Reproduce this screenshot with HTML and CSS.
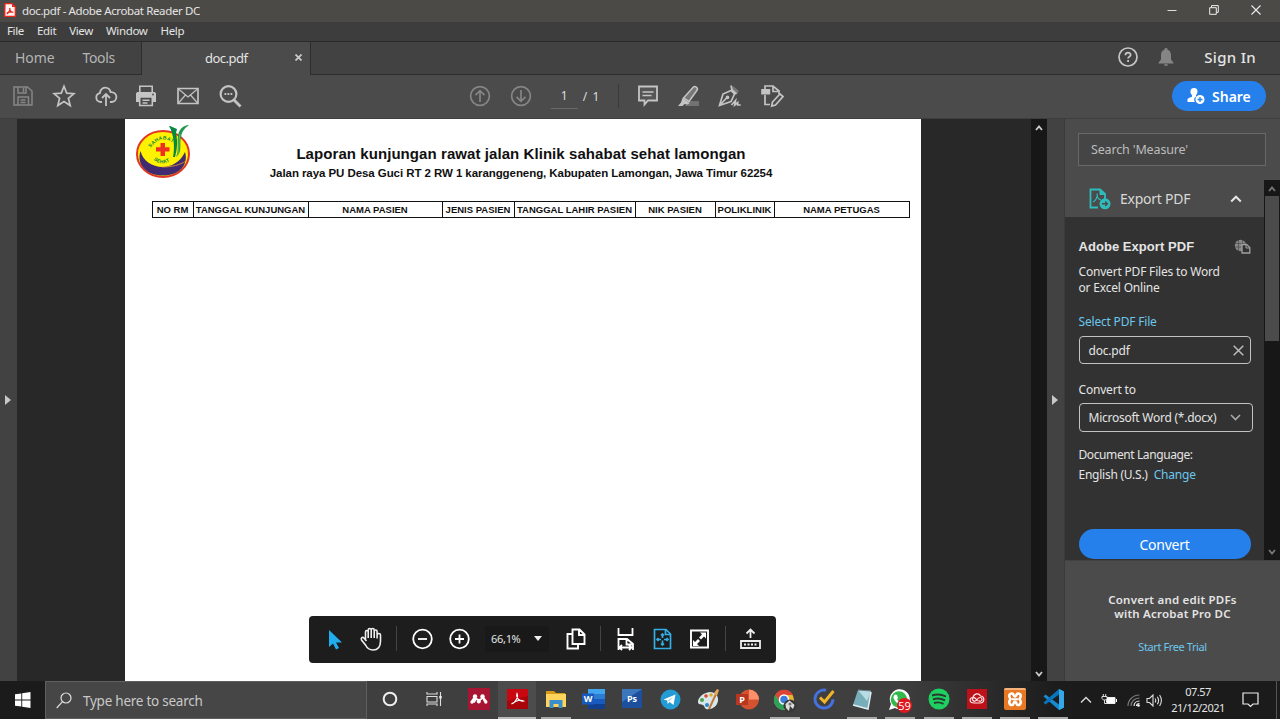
FILE: index.html
```html
<!DOCTYPE html>
<html lang="en">
<head>
<meta charset="utf-8">
<title>doc.pdf - Adobe Acrobat Reader DC</title>
<link rel="stylesheet" href="styles.css">
</head>
<body>
<div class="window">
  <header class="titlebar">
    <svg class="app-icon" width="12" height="14" viewBox="0 0 12 14"><path d="M1 .7h7L11.300 4v9.300H.7z" fill="#fff4f2" stroke="#e8271b" stroke-width="1.300"/><path d="M8 .7v3.300h3.300z" fill="#e8271b"/><path d="M2.700 11c2-1 3.600-4 3.200-6M5.700 5c0 2.500 1.500 4.300 3.600 4.400M3 9.800c2-.8 4-1.200 6.200-.8" fill="none" stroke="#e8271b" stroke-width="1.200"/></svg>
    <span class="title">doc.pdf - Adobe Acrobat Reader DC</span>
    <div class="window-controls">
      <svg width="10" height="10" viewBox="0 0 10 10"><path d="M.5 5.500h9" stroke="#ddd" stroke-width="1"/></svg>
      <svg width="10" height="10" viewBox="0 0 10 10" fill="none" stroke="#eee"><path d="M.7 2.700h6.600v6.600H.7zM2.500 2.500V.6h6.800v6.700H7.500"/></svg>
      <svg width="10" height="10" viewBox="0 0 10 10" stroke="#eee" stroke-width="1.100"><path d="M.5.5l9 9M9.500.5l-9 9"/></svg>
    </div>
  </header>

  <nav class="menubar"><span>File</span><span>Edit</span><span>View</span><span>Window</span><span>Help</span></nav>

  <div class="tabs">
    <div class="tab-home"><span>Home</span><span class="tools">Tools</span></div>
    <div class="tab-doc"><span>doc.pdf</span>
      <svg width="7" height="7" viewBox="0 0 7 7" stroke="#ccc" stroke-width="1.700"><path d="M.5.5l6 6M6.500.5l-6 6"/></svg>
    </div>
    <div class="account">
      <svg width="20" height="20" viewBox="0 0 20 20" fill="none" stroke="#c6c6c6"><circle cx="10" cy="10" r="9" stroke-width="1.700"/><path d="M7.400 8.300c0-3.500 5.200-3.300 5.200-.4 0 1.700-2.500 1.800-2.500 3.700M10.100 13v1.900" stroke-width="1.800"/></svg>
      <svg width="16" height="18" viewBox="0 0 16 18" fill="#858585"><path d="M8 0a1.500 1.500 0 0 1 1.500 1.700C12 2.400 13 4.500 13 7v4.500l2.500 3.200v.8H.5v-.8L3 11.500V7c0-2.500 1-4.600 3.500-5.300A1.500 1.500 0 0 1 8 0zM6 16.200h4a2 1.800 0 0 1-4 0z"/></svg>
      <span>Sign In</span>
    </div>
  </div>

  <div class="toolbar">
    <div class="file-tools">
      <svg width="22" height="22" viewBox="0 0 22 22" fill="none" stroke="#868686" stroke-width="1.500"><path d="M2 2h13.500L20 6v14H2zM6 2v6h8V2M11.500 3v4M6 20v-8h10.500v8M8.500 15h5M8.500 17.500h5"/></svg>
      <svg width="24" height="24" viewBox="0 0 24 24" fill="none" stroke="#c4c4c4" stroke-width="1.700"><path d="M12 2.300l2.700 6.800 7.300.5-5.600 4.700 1.800 7.200-6.200-4-6.200 4 1.800-7.200L2 9.600l7.300-.5z"/></svg>
      <svg width="24" height="24" viewBox="0 0 24 24" fill="none" stroke="#c4c4c4" stroke-width="1.800"><path d="M8 18H6.500a4.500 4.500 0 0 1-.6-8.900C6 4.800 10 2.600 13.300 4c2 .7 3 2.300 3.300 4.100 3.500-.3 5.800 2 5.800 4.900 0 3-2.200 5-5 5H16M12 22V10.500M8 14l4-4 4 4"/></svg>
      <svg class="print" width="24" height="24" viewBox="0 0 24 24" fill="#c4c4c4"><path d="M3.500 8h17L22 9.500V18h-3v-4H5v4H2V9.500z"/><path d="M5.800 2.300h12.400V9H5.800z" fill="#4b4b4b" stroke="#c4c4c4" stroke-width="1.600"/><path d="M3.500 8h17L22 9.500V14H2V9.500z"/><path d="M5.700 13h12.600v8.500H5.700z" fill="#4b4b4b" stroke="#c4c4c4" stroke-width="1.600"/><path d="M8.500 15.500h7V17h-7zM8.500 18.200h5v1.500h-5z"/><circle cx="19" cy="10.500" r=".9" fill="#4b4b4b"/></svg>
      <svg width="22" height="18" viewBox="0 0 22 18" fill="none" stroke="#c4c4c4"><path d="M1 1.500h20v15H1z" stroke-width="1.700"/><path d="M1.500 2l9.500 8 9.500-8M1.500 16l7-8M20.500 16l-7-8" stroke-width="1.200"/></svg>
      <svg width="24" height="24" viewBox="0 0 24 24" fill="none" stroke="#c4c4c4"><circle cx="10.500" cy="10" r="7.900" stroke-width="2.200"/><path d="M16 16l6.500 6.500" stroke-width="2.900"/><path d="M6.500 10h8" stroke-width="1.900" stroke-dasharray="1.800 1.200"/></svg>
    </div>
    <div class="page-tools">
      <svg width="22" height="22" viewBox="0 0 22 22" fill="none" stroke="#858585" stroke-width="1.700"><circle cx="11" cy="11" r="9.400"/><path d="M11 17V6M6.500 10.200L11 5.700l4.500 4.500"/></svg>
      <svg width="22" height="22" viewBox="0 0 22 22" fill="none" stroke="#858585" stroke-width="1.700"><circle cx="11" cy="11" r="9.400"/><path d="M11 5v11M6.500 11.800l4.500 4.500 4.500-4.500"/></svg>
      <span class="page-no">1</span><span class="page-total">/&nbsp; 1</span>
    </div>
    <div class="mark-tools">
      <svg width="24" height="24" viewBox="0 0 24 24" fill="none" stroke="#c4c4c4" stroke-width="1.800"><path d="M3 2.500h18v14H12L8.500 20.500v-4H3z" fill="#555"/><path d="M6.500 8h11M6.500 11.500h9" stroke-width="1.300"/></svg>
      <svg width="24" height="24" viewBox="0 0 24 24"><path d="M10 17h12v5H8z" fill="#727272"/><path d="M6.500 14L16 3.500c2-2.200 5.500.3 4 2.800L12 17.500z" fill="#777" stroke="#c4c4c4" stroke-width="1.500"/><path d="M5.500 14l7 5-1.500 1.500-3.500-.5L5.500 22H1l3-3.500z" fill="#c4c4c4"/></svg>
      <svg width="24" height="24" viewBox="0 0 24 24" fill="none" stroke="#c4c4c4" stroke-width="1.700"><path d="M15 2l6 5-2 3-6-5z" fill="#777" stroke="none"/><path d="M13 1.500l1 4.500 4.500 4M13 6.500L5 10 1.500 21.500l11.500-4 3.500-7.500zM2 21l7-7.500"/><circle cx="9.500" cy="13.300" r="1" fill="#c4c4c4"/><path d="M13.500 21l4-4.500-.8 4.500 3-2.500v2.500h3" stroke-width="1.700"/></svg>
      <svg width="24" height="24" viewBox="0 0 24 24" fill="none" stroke="#c4c4c4" stroke-width="1.700"><path d="M5 5V2h8l6 5v3M13 2v5.500h5M5 11v9.500h5"/><path d="M1.200 5h9v5.500h-9z" fill="#c4c4c4" stroke="none"/><path d="M12.500 18l7.500-8 3 2.500-7.500 8.500-3.800 1z"/></svg>
    </div>
    <button class="share">
      <svg width="18" height="18" viewBox="0 0 18 18" fill="#fff"><path d="M7 1c4.500 0 4.200 5 2 7.300v1.200C6.500 11 7 14 8 15H.5v-2.200c0-1.800 3.500-2.300 4.500-3V8.300C2.800 6 2.500 1 7 1z"/><circle cx="13" cy="12.500" r="4.500"/><path d="M13 10v5M10.500 12.500h5" stroke="#2680eb" stroke-width="1.300"/></svg>
      <span>Share</span>
    </button>
  </div>

  <main class="workspace">
    <div class="gutter left"><i class="arrow"></i></div>
    <div class="viewer">
      <article class="page">
        <svg class="logo" width="56" height="56" viewBox="0 0 56 56">
          <ellipse cx="28" cy="30" rx="26" ry="23" fill="#fff200" stroke="#e23626" stroke-width="2"/>
          <path d="M5.500 27C10 46 40 50 50 28c4 13-6 23.500-22 23.500S1 41 5.500 27z" fill="#422a70"/>
          <path d="M27 43c10 0 18-2 24-6" fill="none" stroke="#e9a126" stroke-width=".8"/>
          <path d="M35 2l7 3-1 4c2 9 1 17-1 24h-2c2-9 1-23-4-31z" fill="#07883f"/>
          <path d="M54 1c-6 0-11 5-11 12-1 8 1 13-2 20 7-5 3-13 5-20 1-6 4-9 8-12z" fill="#20994d"/>
          <path d="M45 10c-2 9 0 16-3 23" fill="none" stroke="#b7d94a" stroke-width=".5"/>
          <path d="M25.500 19h4.500v4.200h4.500v4.300H30V32h-4.500v-4.500H21v-4.300h4.500z" fill="#ed3024"/>
          <path id="arcTop" d="M15.500 24Q27 8 41 22" fill="none"/><path id="arcLow" d="M17 34Q28 46 42 31" fill="none"/>
          <text class="logo-text"><textPath href="#arcTop">SAHABAT</textPath></text>
          <text class="logo-text"><textPath href="#arcLow" startOffset="2">SEHAT</textPath></text>
        </svg>
        <h1>Laporan kunjungan rawat jalan Klinik sahabat sehat lamongan</h1>
        <p class="address">Jalan raya PU Desa Guci RT 2 RW 1 karanggeneng, Kabupaten Lamongan, Jawa Timur 62254</p>
        <table class="visits">
          <colgroup><col class="c1"><col class="c2"><col class="c3"><col class="c4"><col class="c5"><col class="c6"><col class="c7"><col class="c8"></colgroup>
          <tr><th>NO RM</th><th>TANGGAL KUNJUNGAN</th><th>NAMA PASIEN</th><th>JENIS PASIEN</th><th>TANGGAL LAHIR PASIEN</th><th>NIK PASIEN</th><th>POLIKLINIK</th><th>NAMA PETUGAS</th></tr>
        </table>
      </article>
    </div>
    <div class="scroll doc-scroll">
      <svg width="8" height="6" viewBox="0 0 8 6"><path d="M1 5l3-3.500L7 5" /></svg>
      <svg width="8" height="6" viewBox="0 0 8 6"><path d="M1 1l3 3.500L7 1"/></svg>
    </div>
    <div class="gutter right"><i class="arrow"></i></div>

    <aside class="panel">
      <div class="search">Search 'Measure'</div>
      <div class="panel-body">
        <div class="panel-content">
          <div class="export-head">
            <svg width="22" height="22" viewBox="0 0 22 22" fill="none" stroke="#2dbdbd"><path d="M9 19.500H1.500V1.500h9.500L16 6v5" stroke-width="1.800"/><path d="M11 2v4.500h4.500" fill="#2dbdbd"/><path d="M4 14c3-1 5-6 4-8.500M8 6c0 4 2 5.500 4 6" stroke-width="1.100"/><circle cx="16" cy="15.800" r="5.500" fill="#2dbdbd" stroke="none"/><path d="M13 15.800h5M16.200 13.500l2.300 2.300-2.300 2.300" stroke="#4b4b4b" stroke-width="1.400"/></svg>
            <span>Export PDF</span>
            <svg width="12" height="8" viewBox="0 0 12 8" fill="none" stroke="#e6e6e6" stroke-width="2"><path d="M1.200 6.500L6 1.700l4.800 4.800"/></svg>
          </div>
          <div class="export-form">
            <div class="form-title"><b>Adobe Export PDF</b>
              <svg width="17" height="15" viewBox="0 0 17 15"><circle cx="6.500" cy="6.500" r="5.700" fill="#888"/><path d="M1 4.500h11M1 8h11M4.500 1v11M8.500 1v11" stroke="#4c4c4c" stroke-width=".7"/><path d="M8 5.500h4.500l3.300 3V14H8z" fill="#323232" stroke="#a0a0a0" stroke-width="1.300"/><path d="M12 6v3h3.500" fill="none" stroke="#a0a0a0"/></svg>
            </div>
            <p class="desc">Convert PDF Files to Word<br>or Excel Online</p>
            <a class="select-link">Select PDF File</a>
            <div class="field file"><span>doc.pdf</span><svg width="11" height="11" viewBox="0 0 11 11" stroke="#bbb" stroke-width="1.500"><path d="M.7.7l9.600 9.600M10.300.7L.7 10.300"/></svg></div>
            <label class="convert-to">Convert to</label>
            <div class="field format"><span>Microsoft Word (*.docx)</span><svg width="11" height="7" viewBox="0 0 11 7" fill="none" stroke="#aaa" stroke-width="1.600"><path d="M1 1l4.500 4.500L10 1"/></svg></div>
            <p class="language">Document Language:</p>
            <p class="language-value"><span>English (U.S.)</span><a>Change</a></p>
            <button class="convert">Convert</button>
          </div>
        </div>
        <div class="scroll panel-scroll">
          <svg width="8" height="6" viewBox="0 0 8 6"><path d="M1 5l3-3.500L7 5"/></svg>
          <i class="thumb"></i>
          <svg width="8" height="6" viewBox="0 0 8 6"><path d="M1 1l3 3.500L7 1"/></svg>
        </div>
      </div>
      <div class="promo"><b>Convert and edit PDFs<br>with Acrobat Pro DC</b><a>Start Free Trial</a></div>
    </aside>

    <div class="floating">
      <svg class="slot a" height="24" viewBox="0 0 38 24"><path d="M14 3v17l4-3.500 3 6 3-1.500-3-5.500h6z" fill="#20adf0"/></svg>
      <svg class="slot b" height="24" viewBox="0 0 36 24" fill="none" stroke="#eee" stroke-width="1.600"><path d="M12.500 13V5c0-2 2.700-2 2.700 0v6M15.200 10V3c0-2 3-2 3 0v8M18.200 10V3c0-2 3-2 3 0v8M21.200 10V4.500c0-2 2.900-2 2.900 0v7M24.100 11V8c0-2 3.400-2 3.400 0v6c0 6-2.500 9-7.500 9-4 0-6-2-7.500-5L8.500 13c-1-2 1-3.500 2.600-1.800L13.500 14"/></svg>
      <i class="divider"></i>
      <svg class="slot c" height="24" viewBox="0 0 37 24" fill="none" stroke="#fff" stroke-width="1.800"><circle cx="18.500" cy="12" r="9.300"/><path d="M14 12h9"/></svg>
      <svg class="slot c" height="24" viewBox="0 0 37 24" fill="none" stroke="#fff" stroke-width="1.800"><circle cx="18.500" cy="12" r="9.300"/><path d="M14 12h9M18.500 7.500v9"/></svg>
      <div class="zoom"><span>66,1%</span><i class="caret"></i></div>
      <svg class="slot d" height="24" viewBox="0 0 24 24" fill="none" stroke="#fff" stroke-width="1.900"><path d="M8.500 2.500h7l5 5v9.500h-12zM15 3v5h5.500M8 7H3.500v14.500H14V17"/></svg>
      <i class="divider second"></i>
      <svg class="slot c" height="24" viewBox="0 0 37 24" fill="none" stroke="#fff" stroke-width="1.800"><path d="M11.500 1v7h14V1M11.500 23V12H20l6 5v6M19.500 12v5.500h6M13 20.500h11M15 18l-2.500 2.500L15 23M22 18l2.500 2.500L22 23"/></svg>
      <svg class="slot c" height="24" viewBox="0 0 37 24" fill="none" stroke="#35aee5" stroke-width="1.700"><path d="M10.500 2.500h11.500l4.500 4.500v14.500h-16zM21.500 3v4.500H26M18.500 7v4M18.500 13.500v4.500M13 12.500h4M20 12.500h4M17 8.500L18.500 7 20 8.500M17 16.500l1.500 1.500 1.500-1.500M14.500 11L13 12.500l1.500 1.500M22.500 11l1.500 1.500-1.500 1.500"/></svg>
      <svg class="slot c" height="24" viewBox="0 0 37 24"><path d="M10 3.500h17v17H10z" fill="none" stroke="#fff" stroke-width="1.900"/><path d="M19 5.500h6v6l-2-2-3 3-2-2 3-3zM12 13l2 2 3-3 2 2-3 3 2 2h-6z" fill="#fff"/></svg>
      <i class="divider"></i>
      <svg class="slot e" height="24" viewBox="0 0 35 24" fill="none" stroke="#eee" stroke-width="1.800"><path d="M17.500 11V3M13.500 6.500l4-4 4 4M8 14h19v7H8z"/><path d="M11 17.500h14" stroke-width="2" stroke-dasharray="2 1.500"/></svg>
    </div>
  </main>

  <footer class="taskbar">
    <div class="start"><svg width="16" height="16" viewBox="0 0 16 16" fill="#fff"><path d="M0 2.300l6.300-.9v6.100H0zM7.200 1.200L15.500 0v7.500H7.200zM0 8.400h6.300v6.100L0 13.700zM7.200 8.400h8.300V16l-8.300-1.200z"/></svg></div>
    <div class="task-search"><svg width="16" height="17" viewBox="0 0 16 17" fill="none" stroke="#ddd" stroke-width="1.200"><circle cx="10" cy="6" r="5"/><path d="M6.500 9.700L.7 16"/></svg><span>Type here to search</span></div>
    <div class="apps">
      <div class="app wide"><svg width="16" height="16" viewBox="0 0 16 16"><circle cx="8" cy="8" r="6.300" fill="none" stroke="#eee" stroke-width="2"/></svg></div>
      <div class="app wide second"><svg width="17" height="16" viewBox="0 0 17 16" fill="none" stroke="#ddd" stroke-width="1.100"><path d="M1 1v2h10V1M1 5.500h10v5.500H1zM1 15v-2h10v2M14.500 1v14"/><path d="M13.300 5h2.400v2.500h-2.400z" fill="#eee" stroke="none"/></svg></div>
      <div class="app"><svg width="22" height="22" viewBox="0 0 22 22"><path d="M0 0h22v22H0z" fill="#a71532"/><g fill="#fff"><circle cx="7" cy="8.500" r="2.200"/><circle cx="14.500" cy="8.500" r="2.200"/><circle cx="4" cy="14" r="1.700"/><circle cx="10.800" cy="13.500" r="2"/><circle cx="17.800" cy="14" r="1.700"/><path d="M3 13l2.500-4 5.500 2 5-2 3 4-3 1-1.500-3-3 2.500-3-1.500-2 3z"/></g></svg></div>
      <div class="app active"><svg width="21" height="20" viewBox="0 0 21 20"><path d="M0 0h21v20H0z" fill="#c80710"/><path d="M0 12l21-5v13H0z" fill="#a8040a"/><path d="M4.500 15c5-2 7-8 5.500-10.500C8.500 8 12 13 16.500 12c-3-1.500-8 0-12 3" fill="none" stroke="#fff" stroke-width="1.200"/></svg></div>
      <div class="app open"><svg width="22" height="20" viewBox="0 0 22 20"><path d="M1 2h8l2 2h9v13H1z" fill="#d69b17"/><path d="M1 5h20v13H1z" fill="#ffd45d"/><path d="M4.500 11h13v8h-4v-4h-5v4h-4z" fill="#398fcd"/></svg></div>
      <div class="app"><svg width="23" height="20" viewBox="0 0 23 20"><path d="M6 0h17v5H6z" fill="#42a5ee"/><path d="M6 5h17v5H6z" fill="#2b7cd3"/><path d="M6 10h17v5H6z" fill="#185abd"/><path d="M6 15h17v5H6z" fill="#103f91"/><path d="M0 4.500h12v11H0z" fill="#185abd"/><text x="6" y="13" class="glyph">W</text></svg></div>
      <div class="app"><svg width="20" height="20" viewBox="0 0 20 20"><path d="M0 0h20v19H0z" fill="#1d4f9f"/><path d="M0 0h20L0 13z" fill="#3c76bd"/><text x="10" y="12.500" class="glyph">Ps</text></svg></div>
      <div class="app"><svg width="21" height="21" viewBox="0 0 21 21"><circle cx="10.500" cy="10.500" r="10" fill="#239bd4"/><path d="M3.500 10.500l12-5-2 10.500-4-3-1.800 2-.5-3.500z" fill="#fff"/><path d="M7.500 11.500l6-4-4 5z" fill="#b3d7e9"/></svg></div>
      <div class="app"><svg width="24" height="23" viewBox="0 0 24 23"><path d="M9 5c7-3 13 2 12 8s-7 9-12 8c-2-1-1-3-3-4s-5 0-5-3C1 10 5 6 9 5z" fill="#d8e6ed"/><circle cx="5" cy="12" r="2" fill="#4ea344"/><circle cx="9" cy="8" r="1.800" fill="#d94932"/><circle cx="14" cy="7" r="1.800" fill="#e1ac29"/><circle cx="10" cy="17" r="2" fill="#2c86c7"/><path d="M12 21l7-15" stroke="#c27a35" stroke-width="2"/><path d="M17 5l3-4 2 1-2 6z" fill="#e5a85a"/></svg></div>
      <div class="app"><svg width="23" height="21" viewBox="0 0 23 21"><circle cx="13" cy="10.500" r="10" fill="#d35230"/><path d="M13 .5a10 10 0 0 1 10 10H13z" fill="#ff8f6b"/><path d="M0 5h12v11H0z" fill="#b7371e"/><text x="6" y="14" class="glyph">P</text></svg></div>
      <div class="app open"><svg class="chrome" width="24" height="24" viewBox="0 0 24 24"><circle cx="11" cy="11" r="10" fill="#eab52d"/><path d="M2.300 6A10 10 0 0 1 20 6H11L7 14z" fill="#dc4436"/><path d="M2.300 6A10 10 0 0 0 11 21l4-7H7z" fill="#2ca259"/><circle cx="11" cy="10.500" r="4.500" fill="#3e7bdd" stroke="#fff" stroke-width="1.500"/><circle cx="17" cy="17" r="6.500" fill="#383838"/><path d="M12.500 15l4-3.500 5 4.500-1.500 4-3-3-1 5-3-3z" fill="#ddd"/><circle cx="17" cy="15" r="1.600" fill="#777"/></svg></div>
      <div class="app"><svg width="22" height="22" viewBox="0 0 22 22" fill="none"><path d="M13 2.300a9 9 0 1 0 7 9" stroke="#4571df" stroke-width="3"/><path d="M7 9.500l4.500 4.500L20.500 3" stroke="#f0b528" stroke-width="3"/></svg></div>
      <div class="app open"><svg width="22" height="22" viewBox="0 0 22 22"><path d="M7 2l13 1-3 18-15-4z" fill="#77aeba"/><path d="M7 2l13 1-4 10z" fill="#b7dce1"/><path d="M2 17l15 4 3-17" fill="none" stroke="#e1edf0" stroke-width="1.500"/><path d="M7 2l13 1" stroke="#687e84"/></svg></div>
      <div class="app open"><svg class="whatsapp" width="24" height="24" viewBox="0 0 24 24"><path d="M1 21l2-6A10 10 0 1 1 7 19z" fill="#fff"/><circle cx="11" cy="10.500" r="8.200" fill="#31b94b"/><path d="M7 5.500l2 .5 1 3-1 1c1 2 2 3 4 4l1.500-1.500 3 1.500c0 3-3 3-5 2-3-1-6-4-7-7 0-1 0-2.500 1.500-3.500z" fill="#fff"/><circle cx="16.500" cy="16.500" r="7.500" fill="#df1820"/><text x="16.500" y="20.500" class="badge">59</text></svg></div>
      <div class="app open"><svg width="22" height="22" viewBox="0 0 22 22" fill="none"><circle cx="11" cy="11" r="10.500" fill="#20cf61"/><path d="M4 7.500q7-2.500 14 1M5 11.300q6-2 12 1M6 15q5-1.500 9.500.8" stroke="#263b2d" stroke-width="1.900"/></svg></div>
      <div class="app open"><svg width="20" height="20" viewBox="0 0 20 20" fill="none"><path d="M0 0h20v20H0z" fill="#bd1019"/><path d="M7 14C2 14 2 8.500 6 8.500 7 4 12 4 13.500 7 18 7 18 14 13 14zM10.500 12L8.500 9.500C6.500 7.500 4.500 10 6 11.500s3 .5 4.500-1.500 4-2 4.500 0-2 3-3.500 1.500" stroke="#ffe8e6" stroke-width="1.200"/></svg></div>
      <div class="app open"><svg width="22" height="22" viewBox="0 0 22 22" fill="none"><rect width="22" height="22" rx="2" fill="#e87824"/><path d="M0 2a2 2 0 0 1 2-2h18a2 2 0 0 1 2 2z" fill="#f5b27c"/><path d="M8 5.500c2 0 1.500 3 3 3s1-3 3-3c3 0 3.500 3 1.500 5.500C17.500 13.500 17 17 14 17c-2 0-1.500-3.500-3-3.500S10 17 8 17c-3 0-3.500-3.500-1.500-6C4.500 8.500 5 5.500 8 5.500z" stroke="#fff" stroke-width="2.600"/><path d="M8 11.200h6" stroke="#fff" stroke-width="2"/></svg></div>
      <div class="app open"><svg width="23" height="23" viewBox="0 0 23 23"><path d="M17 1l5 2.500v16L17 22 1.500 8.500l2-2L17 16.500z" fill="#168bd2"/><path d="M17 6.500L3.500 16.500l-2-2L17 1z" fill="#0874b9"/><path d="M17 1l5 2.500v16L17 22z" fill="#35a9e8"/></svg></div>
    </div>
    <div class="tray">
      <svg width="12" height="8" viewBox="0 0 12 8" fill="none" stroke="#ddd" stroke-width="1.400"><path d="M1 6.500l5-5 5 5"/></svg>
      <svg class="battery" width="16" height="13" viewBox="0 0 16 13"><path d="M5.500 3.500H14v6H5.500z" fill="#fff" stroke="#eee"/><path d="M15 5h1v3h-1z" fill="#fff"/><path d="M1 2.500h5v2L4.500 6h-2L1 4.500zM2.300 0v2.500M4.700 0v2.500M3.500 6v3.500H6" fill="#1b1b1b" stroke="#ddd"/></svg>
      <svg class="wifi" width="13" height="13" viewBox="0 0 13 13" fill="none" stroke="#777" stroke-width="1.200"><path d="M1 12C1 6 6 1 12.500 1M4 12c0-4.500 4-8 8.500-8"/><path d="M7 12c0-3 2.500-5 5.500-5M9.500 12c0-1.500 1.300-2.500 3-2.500" stroke="#eee"/><circle cx="11.500" cy="11.500" r="1.300" fill="#fff" stroke="none"/></svg>
      <svg class="volume" width="17" height="13" viewBox="0 0 17 13" fill="none" stroke="#ddd" stroke-width="1.100"><path d="M1 4.500h2.500L7 1v11L3.500 8.500H1zM9 4.500q1.500 2 0 4M11.300 2.800q2.500 3.700 0 7.400M13.600 1q3.600 5.500 0 11"/></svg>
      <div class="clock"><span>07.57</span><span>21/12/2021</span></div>
      <svg class="notice" width="17" height="16" viewBox="0 0 17 16" fill="none" stroke="#eee" stroke-width="1.200"><path d="M1 1h15v11h-5l-2.500 2.500L6 12H1z"/></svg>
      <i class="desktop-line"></i>
    </div>
  </footer>
</div>
</body>
</html>
```
FILE: styles.css
```css
* { box-sizing: border-box; }
body { margin: 0; overflow: hidden; background: #282828; font-family: "Noto Sans", "Open Sans", sans-serif; color: #e4e4e4; }
svg { display: block; flex: none; }
h1, p { margin: 0; }
button { border: 0; padding: 0; font: inherit; color: #fff; background: #2680eb; }
.window { width: 1280px; height: 719px; display: flex; flex-direction: column; white-space: nowrap; }

.titlebar { height: 22px; flex: none; display: flex; align-items: center; padding: 0 19px 2px 4px; background: #4b4a47; font-size: 11.500px; }
.app-icon { margin-right: 6px; }
.title { letter-spacing: -.38px; }
.window-controls { margin-left: auto; display: flex; gap: 32px; }
.menubar { height: 20px; flex: none; display: flex; align-items: center; gap: 13px; padding: 0 7px 2px; background: #3d3d3d; border-bottom: 1px solid #2b2b2b; font-size: 11.500px; letter-spacing: -.35px; }

.tabs { height: 33px; flex: none; display: flex; background: #424242; }
.tab-home { width: 142px; display: flex; align-items: center; padding: 0 0 2px 15px; border-right: 1px solid #2d2d2d; border-bottom: 1px solid #2d2d2d; color: #b5b5b5; font-size: 14px; letter-spacing: -.1px; }
.tools { margin-left: 28px; letter-spacing: -.3px; }
.tab-doc { width: 169px; display: flex; align-items: center; padding: 0 8px 2px 63px; justify-content: space-between; background: #4b4b4b; border-right: 1px solid #2d2d2d; font-size: 13px; letter-spacing: -.5px; }
.account { flex: 1; display: flex; align-items: center; justify-content: flex-end; padding: 0 24px 2px 0; border-bottom: 1px solid #2d2d2d; font-size: 15px; font-weight: 500; letter-spacing: .3px; }
.account svg + svg { margin: 0 30px 0 20px; }

.toolbar { height: 44px; flex: none; display: flex; align-items: center; background: #4b4b4b; border-bottom: 1px solid #3e3e3e; padding-bottom: 1px; }
.file-tools { display: grid; grid-template-columns: repeat(6, 41.300px); place-items: center; margin-left: 2.500px; }
.print { margin-right: 2px; }
.page-tools { display: flex; align-items: center; margin-left: 218.500px; font-size: 12px; color: #ddd; }
.page-tools svg + svg { margin-left: 19px; }
.page-no { width: 27px; height: 26px; line-height: 26px; margin-left: 19px; text-align: center; border-bottom: 1px solid #696969; }
.page-total { margin-left: 5px; letter-spacing: -.3px; }
.mark-tools { display: grid; grid-template-columns: repeat(4, 41.300px); place-items: center; margin-left: 19px; border-left: 1px solid #3a3a3a; padding-left: 8px; }
.share { width: 94px; height: 30px; display: flex; align-items: center; gap: 7px; margin-left: auto; margin-right: 14px; padding-left: 15px; border-radius: 15px; font-size: 14px; font-weight: 600; }

.workspace { position: relative; height: 562px; flex: none; display: flex; background: #282828; }
.gutter { display: flex; align-items: center; background: #424242; }
.gutter.left { width: 17px; padding-left: 5px; }
.gutter.right { width: 18px; padding-left: 5px; border-right: 1px solid #3b3b3b; }
.arrow { border: 5px solid transparent; border-left: 6px solid #c8c8c8; border-right: 0; }
.viewer { width: 1014px; padding-left: 108px; }
.page { width: 796px; height: 562px; background: #fff; color: #101010; font-family: "Liberation Sans", Arial, sans-serif; display: grid; grid-template-columns: 1fr; grid-template-rows: 26px 19px 38px auto; align-content: start; }
.logo { grid-area: 1 / 1 / 4 / 2; margin: 5px 0 0 10px; }
.logo-text { font: bold 5px "Liberation Sans", sans-serif; fill: #07883f; letter-spacing: .3px; }
.page h1 { grid-area: 1 / 1 / 2 / 2; padding-top: 25px; text-align: center; font-size: 15px; line-height: 19px; margin-right: 4px; letter-spacing: .07px; }
.address { grid-area: 2 / 1 / 3 / 2; padding-top: 19px; text-align: center; font-size: 11.500px; line-height: 18px; font-weight: bold; margin-right: 4px; letter-spacing: -.07px; }
.visits { grid-area: 4 / 1 / 5 / 2; width: 758px; height: 17px; margin: -1px 0 0 26.500px; border-collapse: collapse; table-layout: fixed; font-size: 9.500px; }
.visits th { border: 1px solid #111; padding: 0; line-height: 14px; }
.c1 { width: 41px; } .c2 { width: 115px; } .c3 { width: 134px; } .c4 { width: 72px; } .c5 { width: 121px; } .c6 { width: 80px; } .c7 { width: 59px; } .c8 { width: 135px; }

.scroll { width: 16px; display: flex; flex-direction: column; align-items: center; justify-content: space-between; background: #171717; }
.scroll path { fill: none; stroke: #ccc; stroke-width: 1.800; }
.doc-scroll { padding: 6px 0 4px; }

.panel { width: 215px; display: flex; flex-direction: column; background: #4b4b4b; }
.search { width: 188px; height: 33px; margin: 14px 0 0 13px; padding-left: 12px; border: 1px solid #686868; background: #454545; color: #bcbcbc; font-size: 12.500px; line-height: 32px; letter-spacing: -.15px; }
.panel-body { height: 380px; margin-top: 14px; display: flex; }
.panel-content { width: 199px; }
.export-head { height: 37px; display: flex; align-items: center; padding-left: 24px; font-size: 14px; color: #d8d8d8; }
.export-head span { margin-left: 9px; width: 110px; letter-spacing: -.25px; }
.export-form { height: 343px; padding: 21px 0 0 13.500px; background: #323232; font-size: 12px; letter-spacing: -.19px; }
.form-title { width: 172px; height: 16px; display: flex; align-items: center; justify-content: space-between; font-family: "Liberation Sans", sans-serif; font-size: 13px; letter-spacing: .05px; }
.desc { margin-top: 10px; line-height: 16px; }
.select-link { display: block; margin-top: 18px; line-height: 16px; }
.panel a { color: #6bc7ed; }
.field { display: flex; align-items: center; justify-content: space-between; height: 28px; padding: 0 6px 0 9px; border: 1px solid #c2c2c2; border-radius: 4px; }
.file { width: 172px; margin-top: 6px; }
.convert-to { display: block; margin-top: 18px; line-height: 16px; }
.format { width: 174px; height: 29px; margin-top: 5px; padding-right: 11px; letter-spacing: -.25px; }
.language { margin-top: 15px; line-height: 16px; letter-spacing: -.4px; }
.language-value { margin-top: 4px; line-height: 16px; display: flex; gap: 6px; }
.language-value span { letter-spacing: -.25px; }
.convert { display: block; width: 172px; height: 30px; margin-top: 46px; border-radius: 15px; font-size: 14px; letter-spacing: -.25px; }
.panel-scroll { padding: 6px 0 5px; }
.panel-scroll path { stroke: #777; }
.thumb { width: 14px; height: 145px; background: #4b4b4b; margin: 4px 0 auto; }
.promo { flex: 1; display: flex; flex-direction: column; align-items: center; padding-top: 32px; font-size: 11.500px; line-height: 14px; text-align: center; border-top: 1px solid #424242; letter-spacing: .22px; }
.promo b { font-weight: 600; }
.promo a { margin-top: 19px; font-size: 11px; letter-spacing: -.4px; }

.floating { position: absolute; left: 309px; top: 497px; width: 467px; height: 47px; display: flex; align-items: center; padding: 0 0 2px 6px; border-radius: 4px; background: #1d1d1d; }
.slot.a { width: 38px; } .slot.b { width: 36px; } .slot.c { width: 37px; } .slot.d { width: 24px; margin-left: 15px; } .slot.e { width: 35px; }
.divider { flex: none; width: 1px; height: 25px; background: #444; margin-left: 7px; margin-right: 7px; }
.divider.second { margin-left: 12px; margin-right: 6px; }
.zoom { flex: none; width: 64px; height: 26px; margin-left: 7px; display: flex; align-items: center; justify-content: space-between; padding: 0 7px 0 6px; background: #191919; font-size: 11px; letter-spacing: -.3px; }
.caret { border: 4px solid transparent; border-top: 5px solid #eee; border-bottom: 0; }

.taskbar { height: 38px; flex: none; display: flex; background: #3d3d3d; }
.start { width: 45px; display: flex; align-items: center; padding-left: 15px; background: #1b1b1b; }
.task-search { width: 322px; display: flex; align-items: center; padding-left: 10px; background: #464646; border: 1px solid #606060; color: #c9c9c9; font-size: 13.500px; letter-spacing: -.25px; }
.task-search span { margin: 1px 0 0 11px; }
.apps { width: 705px; display: flex; background: linear-gradient(90deg, #3f3f3f 0 530px, #1c1c1c 690px); }
.app { width: 38.300px; display: flex; align-items: center; justify-content: center; flex: none; border: solid transparent; border-width: 0 0 2px; }
.app.wide { width: 46px; }
.app.second { width: 46.800px; padding-right: 4px; }
.app.open { background: linear-gradient(#aaa, #aaa) center bottom / 30px 2px no-repeat border-box; }
.app.active { background: #4c4c4c; border-color: #bbb; }
.chrome, .whatsapp { margin-top: 3px; }
.glyph { font: bold 9px "Open Sans", sans-serif; fill: #fff; text-anchor: middle; }
.badge { font: 11px "Open Sans", sans-serif; fill: #fff; text-anchor: middle; }
.tray { flex: 1; display: flex; align-items: center; padding-left: 8px; background: #1b1b1b; }
.battery { margin-left: 9px; } .wifi { margin-left: 10px; } .volume { margin-left: 6px; }
.clock { width: 66px; margin-left: 2px; display: flex; flex-direction: column; text-align: center; font-size: 11px; line-height: 16px; letter-spacing: -.5px; }
.notice { margin-left: 11px; }
.desktop-line { width: 1px; height: 38px; background: #555; margin-left: 17px; }
```
